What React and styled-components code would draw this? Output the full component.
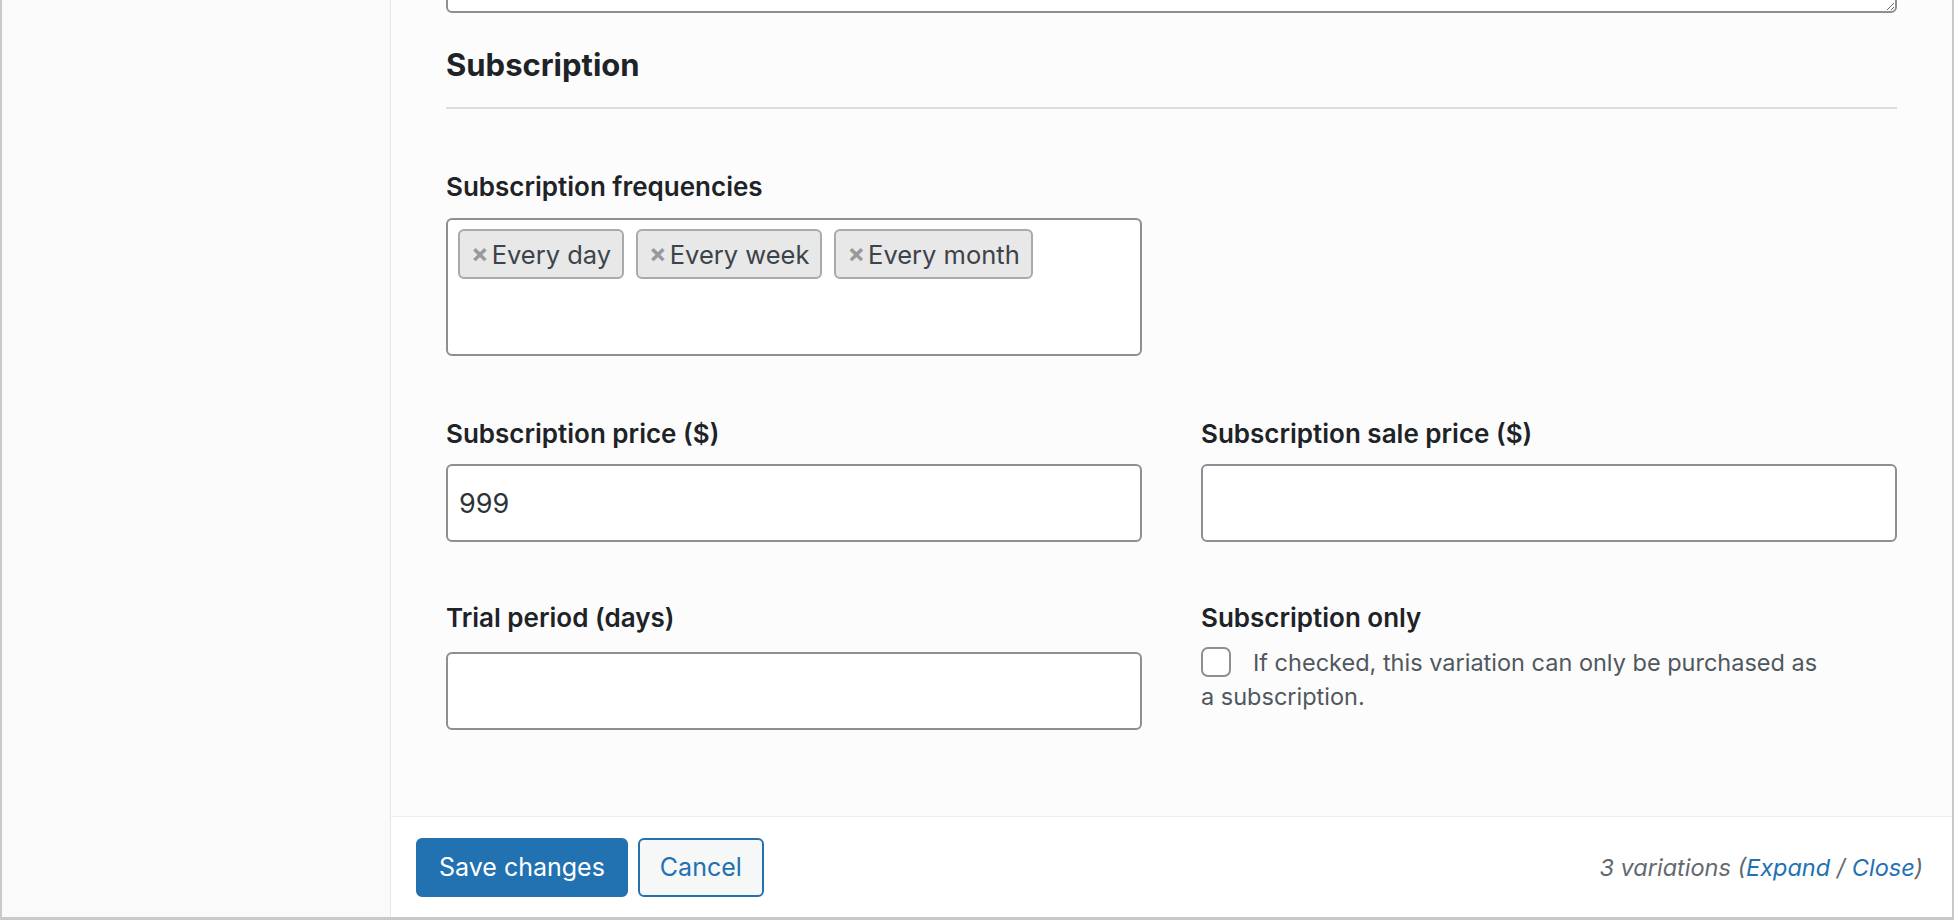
import styled, { createGlobalStyle } from "styled-components";

const GlobalStyle = createGlobalStyle`
  html, body {
    margin: 0;
    padding: 0;
    background: #ffffff;
  }
  body {
    font-family: Inter, "Noto Sans", "Liberation Sans", sans-serif;
    color: #1d2327;
  }
`;

const StyledPanel = styled.div`
  display: flex;
  height: 920px;
  box-sizing: border-box;
  border: 2px solid #c8c9cc;
  border-top: none;
  border-bottom-width: 3px;
  overflow: hidden;
`;

const StyledTabs = styled.div`
  flex: none;
  width: 388px;
  background: #fafafa;
  border-right: 1px solid #e6e6e6;
`;

const StyledVariation = styled.div`
  flex: 1;
  min-width: 0;
  display: flex;
  flex-direction: column;
`;

const StyledBody = styled.div`
  flex: 1;
  background: #fcfcfc;
  padding: 0 55px;
`;

// the notes field above is scrolled mostly out of view
const StyledNotes = styled.textarea`
  display: block;
  width: 100%;
  height: 120px;
  margin-top: -107px;
  box-sizing: border-box;
  border: 2px solid #8c8f94;
  border-radius: 6px;
  background: #ffffff;
  resize: vertical;
`;

const StyledHeading = styled.h3`
  margin: 32px 0 0;
  padding-bottom: 22px;
  font-size: 31px;
  line-height: 40px;
  font-weight: 700;
  color: #1d2327;
  border-bottom: 2px solid #dcdcde;
`;

const StyledGrid = styled.div`
  display: grid;
  grid-template-columns: ${({ columns }) => columns};
  column-gap: 59px;
  margin-top: ${({ top }) => top}px;
`;

const StyledField = styled.div`
  display: flex;
  flex-direction: column;
  gap: ${({ gap }) => gap}px;
`;

const StyledLabel = styled.label`
  font-size: 26px;
  line-height: 32px;
  font-weight: 600;
  color: #1d2327;
`;

const StyledTagBox = styled.div`
  display: flex;
  flex-wrap: wrap;
  align-content: flex-start;
  gap: 12px;
  height: 138px;
  box-sizing: border-box;
  padding: 9px 10px;
  border: 2px solid #8c8f94;
  border-radius: 6px;
  background: #ffffff;
`;

const StyledTag = styled.span`
  display: inline-flex;
  align-items: center;
  height: 50px;
  box-sizing: border-box;
  padding: 0 11px 0 11px;
  border: 2px solid #aaaaaa;
  border-radius: 6px;
  background: #e8e8e8;
  font-size: 25.5px;
  color: #3c434a;
`;

const StyledRemove = styled.span`
  margin-right: 3px;
  font-size: 26px;
  line-height: 1;
  font-weight: 700;
  color: #999999;
`;

const StyledInput = styled.input`
  display: block;
  width: 100%;
  height: 78px;
  box-sizing: border-box;
  padding: 0 11px;
  border: 2px solid #8c8f94;
  border-radius: 6px;
  background: #ffffff;
  font-family: inherit;
  font-size: 27px;
  color: #2c3338;
  outline: none;
`;

const StyledDescription = styled.p`
  margin: 0;
  max-width: 630px;
  font-size: 23.5px;
  line-height: 34px;
  color: #50575e;
`;

const StyledCheckbox = styled.span`
  display: inline-block;
  width: 30px;
  height: 30px;
  box-sizing: border-box;
  margin-right: 22px;
  border: 2px solid #8c8f94;
  border-radius: 7px;
  background: #ffffff;
  vertical-align: -6px;
`;

const StyledToolbar = styled.div`
  flex: none;
  display: flex;
  align-items: center;
  justify-content: space-between;
  height: 101px;
  box-sizing: border-box;
  padding: 0 29px 0 25px;
  background: #ffffff;
  border-top: 1px solid #eeeeee;
`;

const StyledActions = styled.div`
  display: flex;
  gap: 10px;
`;

const StyledButton = styled.button`
  height: 59px;
  box-sizing: border-box;
  padding: 0 ${({ primary }) => (primary ? 21 : 20)}px;
  border: 2px solid #2271b1;
  border-radius: 6px;
  background: ${({ primary }) => (primary ? "#2271b1" : "#f6f7f7")};
  color: ${({ primary }) => (primary ? "#ffffff" : "#2271b1")};
  font-family: inherit;
  font-size: 25px;
`;

const StyledCount = styled.div`
  font-size: 23.5px;
  font-style: italic;
  color: #646970;
`;

const StyledLink = styled.a`
  color: #2271b1;
  text-decoration: none;
`;

const frequencies = ["Every day", "Every week", "Every month"];

function App() {
  return (
    <>
      <GlobalStyle />
      <StyledPanel>
        <StyledTabs />
        <StyledVariation>
          <StyledBody>
            <StyledNotes />
            <StyledHeading>Subscription</StyledHeading>

            <StyledGrid columns="696px 1fr" top={62}>
              <StyledField gap={15}>
                <StyledLabel>Subscription frequencies</StyledLabel>
                <StyledTagBox>
                  {frequencies.map((f) => (
                    <StyledTag key={f}>
                      <StyledRemove>×</StyledRemove>
                      {f}
                    </StyledTag>
                  ))}
                </StyledTagBox>
              </StyledField>
            </StyledGrid>

            <StyledGrid columns="1fr 1fr" top={62}>
              <StyledField gap={14}>
                <StyledLabel>Subscription price ($)</StyledLabel>
                <StyledInput defaultValue="999" />
              </StyledField>
              <StyledField gap={14}>
                <StyledLabel>Subscription sale price ($)</StyledLabel>
                <StyledInput />
              </StyledField>
            </StyledGrid>

            <StyledGrid columns="1fr 1fr" top={60}>
              <StyledField gap={18}>
                <StyledLabel>Trial period (days)</StyledLabel>
                <StyledInput />
              </StyledField>
              <StyledField gap={12}>
                <StyledLabel>Subscription only</StyledLabel>
                <StyledDescription>
                  <StyledCheckbox />
                  If checked, this variation can only be purchased as a
                  subscription.
                </StyledDescription>
              </StyledField>
            </StyledGrid>
          </StyledBody>

          <StyledToolbar>
            <StyledActions>
              <StyledButton primary>Save changes</StyledButton>
              <StyledButton>Cancel</StyledButton>
            </StyledActions>
            <StyledCount>
              3 variations (<StyledLink href="#">Expand</StyledLink> /{" "}
              <StyledLink href="#">Close</StyledLink>)
            </StyledCount>
          </StyledToolbar>
        </StyledVariation>
      </StyledPanel>
    </>
  );
}

export default App;
